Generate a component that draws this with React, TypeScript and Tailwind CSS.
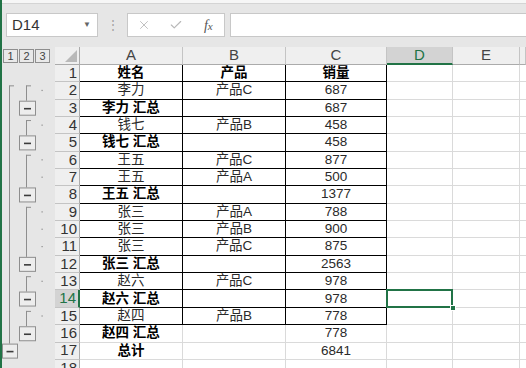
import React from 'react';
import { X, Check } from 'lucide-react';

type Row = { a: string; b: string; c: string; head?: boolean; sum?: boolean };

const rows: Row[] = [
  { a: '姓名', b: '产品', c: '销量', head: true },
  { a: '李力', b: '产品C', c: '687' },
  { a: '李力 汇总', b: '', c: '687', sum: true },
  { a: '钱七', b: '产品B', c: '458' },
  { a: '钱七 汇总', b: '', c: '458', sum: true },
  { a: '王五', b: '产品C', c: '877' },
  { a: '王五', b: '产品A', c: '500' },
  { a: '王五 汇总', b: '', c: '1377', sum: true },
  { a: '张三', b: '产品A', c: '788' },
  { a: '张三', b: '产品B', c: '900' },
  { a: '张三', b: '产品C', c: '875' },
  { a: '张三 汇总', b: '', c: '2563', sum: true },
  { a: '赵六', b: '产品C', c: '978' },
  { a: '赵六 汇总', b: '', c: '978', sum: true },
  { a: '赵四', b: '产品B', c: '778' },
  { a: '赵四 汇总', b: '', c: '778', sum: true },
  { a: '总计', b: '', c: '6841', sum: true },
  { a: '', b: '', c: '' },
];

const R = 17.35;
const top = (r: number) => (r - 1) * R;
const groups = [[2, 3], [4, 5], [6, 8], [9, 12], [13, 14], [15, 16]];
const details = [2, 4, 6, 7, 9, 10, 11, 13, 15];

const MinusBtn = ({ x, y, w }: { x: number; y: number; w: number }) => (
  <g>
    <rect x={x + 0.5} y={y + 0.5} width={w} height={14} fill="#ededed" stroke="#8e8e8e" />
    <line x1={x + w / 2 - 3} x2={x + w / 2 + 4} y1={y + 8} y2={y + 8} stroke="#3c3c3c" strokeWidth={1.6} />
  </g>
);

// outline gutter, rows 1..18
const Outline = () => (
  <svg width={53} height={320} className="block">
    <line x1={7.5} x2={7.5} y1={top(2) + 3} y2={top(17) + 1} stroke="#8e8e8e" />
    <line x1={7.5} x2={12} y1={top(2) + 3.5} y2={top(2) + 3.5} stroke="#8e8e8e" />
    <MinusBtn x={0} y={top(17) + 1} w={15} />
    {groups.map(([s, b]) => (
      <g key={s}>
        <line x1={24.5} x2={24.5} y1={top(s) + 3} y2={top(b) + 1} stroke="#8e8e8e" />
        <line x1={24.5} x2={29} y1={top(s) + 3.5} y2={top(s) + 3.5} stroke="#8e8e8e" />
        <MinusBtn x={17} y={top(b) + 1} w={16} />
      </g>
    ))}
    {details.map((r) => (
      <rect key={r} x={39.5} y={top(r) + 7.5} width={1.2} height={1.2} fill="#8a8a8a" />
    ))}
  </svg>
);

const grid = 'border-[#dadada]';

export default function App() {
  return (
    <div className="w-[526px] h-[368px] overflow-hidden flex bg-white font-['Liberation_Sans','Noto_Sans_CJK_SC',sans-serif]">
      <div className="w-[2px] shrink-0 bg-[#217346]" />
      <div className="flex-1 flex flex-col min-w-0">
        {/* formula bar */}
        <div className="h-[47px] shrink-0 bg-[#e6e6e6] flex flex-col">
          <div className="h-[4px] bg-[#f6f6f6] border-b border-[#d4d4d4]" />
          <div className="mt-[9px] h-[24px] flex items-stretch pl-[4px]">
            <div className="w-[92px] bg-white border border-[#c8c8c8] flex items-center justify-between pl-[5px] pr-[6px]">
              <span className="text-[15px] text-[#333]">D14</span>
              <span className="text-[8px] text-[#666]">▼</span>
            </div>
            <div className="w-[29px] flex items-center justify-center text-[#a0a0a0] text-[12px]">⋮</div>
            <div className="w-[98px] bg-white border border-[#c8c8c8] flex items-center">
              <div className="w-[33px] flex justify-center"><X size={14} strokeWidth={1.5} color="#b8b8b8" /></div>
              <div className="w-[33px] flex justify-center"><Check size={14} strokeWidth={2} color="#b8b8b8" /></div>
              <div className="w-[32px] flex justify-center font-['Liberation_Serif',serif] italic text-[14px] text-[#555]">
                f<span className="text-[11px] mt-[3px]">x</span>
              </div>
            </div>
            <div className="ml-[5px] flex-1 bg-white border border-[#c8c8c8] border-r-0" />
          </div>
        </div>

        {/* sheet */}
        <div className="grid grid-cols-[53px_25px_103px_103px_101px_66px_67px_1fr] grid-rows-[18px_repeat(18,17.35px)] text-[#2a2a2a]">
          <div className="bg-[#e6e6e6] flex gap-px pl-[1px] pt-[2px]">
            {['1', '2', '3'].map((n) => (
              <div key={n} className="w-[15px] h-[14px] border border-[#8e8e8e] bg-[#e9e9e9] flex items-center justify-center text-[11px] text-[#444]">
                {n}
              </div>
            ))}
          </div>
          <div className="bg-[#efefef] border-r border-b border-[#ababab] flex items-end justify-end pr-[2px] pb-[2px]">
            <svg width={12} height={12}><polygon points="12,0 12,12 0,12" fill="#b9b9b9" /></svg>
          </div>
          {['A', 'B', 'C', 'D', 'E', ''].map((c) =>
            c === 'D' ? (
              <div key={c} className="bg-[#d3d3d3] border-r border-[#c4c4c4] border-b-2 border-b-[#217346] flex items-center justify-center text-[15px] text-[#217346]">
                {c}
              </div>
            ) : (
              <div key={c || 'F'} className="bg-[#efefef] border-r border-[#c4c4c4] border-b border-b-[#ababab] flex items-center justify-center text-[15px] text-[#444]">
                {c}
              </div>
            )
          )}

          <div className="col-start-1 row-start-2 row-span-18 bg-[#e6e6e6]">
            <Outline />
          </div>

          {rows.map((row, i) => {
            const n = i + 1;
            const inTable = n <= 15;
            const tb = inTable ? 'border-black' : grid;
            const sel = n === 14;
            return (
              <React.Fragment key={n}>
                <div
                  className={
                    sel
                      ? 'bg-[#d3d3d3] border-b border-[#c4c4c4] border-r-2 border-r-[#217346] flex items-center justify-end pr-[2px] text-[15px] text-[#217346]'
                      : 'bg-[#efefef] border-b border-[#c4c4c4] border-r border-r-[#ababab] flex items-center justify-end pr-[2px] text-[15px] text-[#333]'
                  }
                >
                  {n}
                </div>
                <div className={`border-r border-b ${tb} flex items-center justify-center text-[13.5px] ${row.head || row.sum ? 'font-bold text-black' : ''}`}>
                  {row.a}
                </div>
                <div className={`border-r border-b ${tb} flex items-center justify-center text-[13.5px] ${row.head ? 'font-bold text-black' : ''}`}>
                  {row.b}
                </div>
                <div className={`border-r border-b ${tb} flex items-center justify-center text-[13.5px] ${row.head ? 'font-bold text-black' : ''}`}>
                  {row.c}
                </div>
                <div className={`border-r border-b ${grid} relative ${sel ? 'z-10' : ''}`}>
                  {sel && (
                    <>
                      <div className="absolute -left-px -top-px -right-px -bottom-px border-2 border-[#217346]" />
                      <div className="absolute -right-[4px] -bottom-[4px] w-[6px] h-[6px] bg-[#217346] border border-white" />
                    </>
                  )}
                </div>
                <div className={`border-r border-b ${grid}`} />
                <div className={`border-b ${grid}`} />
              </React.Fragment>
            );
          })}
        </div>
      </div>
    </div>
  );
}
